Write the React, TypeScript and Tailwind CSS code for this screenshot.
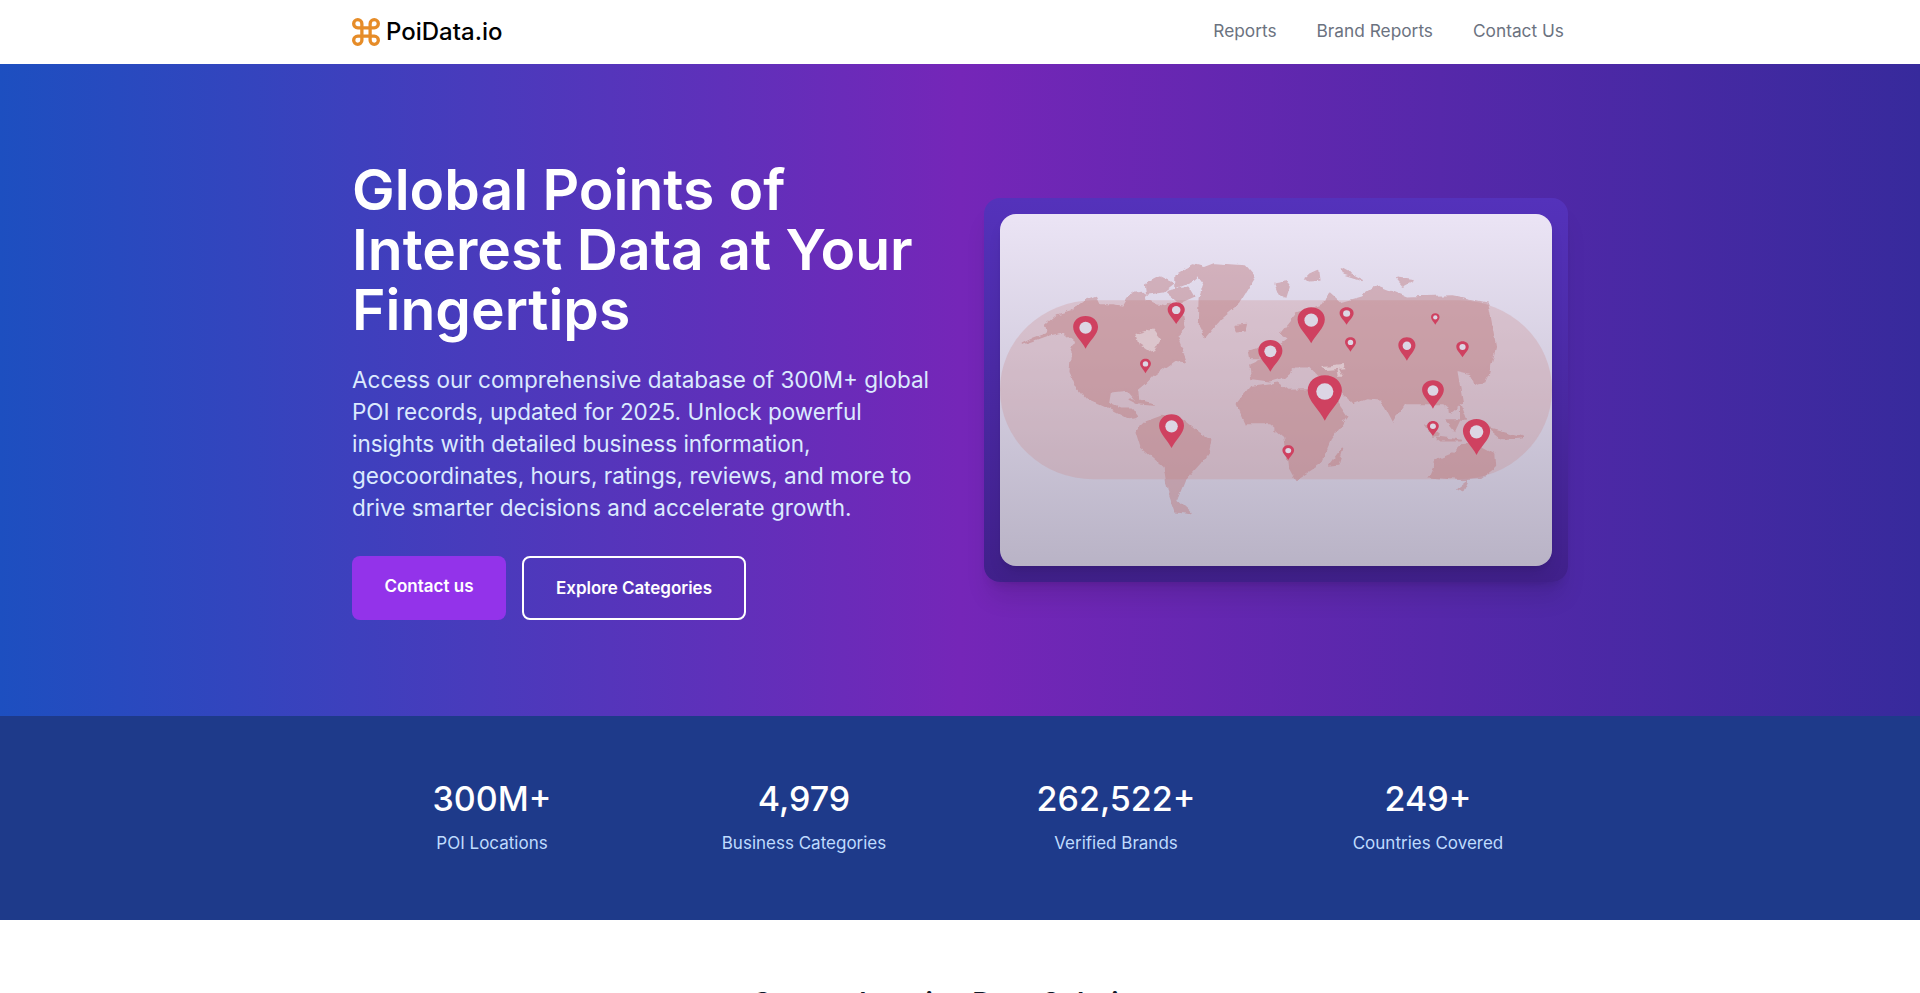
import React from "react";

const FONT = "font-['Inter','Liberation_Sans',sans-serif]";

const pins: [number, number, number, number][] = [
  [297, 378, 476, 64],
  [530, 337, 402, 44],
  [877, 352, 460, 70],
  [968, 352, 404, 36],
  [1196, 370, 404, 22],
  [978, 442, 485, 28],
  [1123, 442, 512, 44],
  [1266, 454, 502, 32],
  [772, 450, 545, 62],
  [451, 506, 550, 28],
  [912, 556, 692, 88],
  [1190, 571, 656, 56],
  [1190, 693, 738, 30],
  [1302, 687, 795, 70],
  [518, 673, 774, 64],
  [818, 766, 810, 30],
];

const land = [
  // North America
  "M135 462 L165 445 L200 430 L195 405 L225 375 L262 362 L300 330 L322 320 L332 345 L365 345 L395 350 L405 330 L420 308 L445 305 L452 330 L480 345 L500 352 L512 340 L545 370 L552 415 L530 440 L555 515 L525 510 L500 530 L470 555 L450 580 L430 600 L433 640 L420 620 L405 600 L360 605 L355 640 L385 655 L415 655 L430 680 L410 685 L370 660 L330 640 L300 625 L275 590 L258 545 L262 490 L270 455 L240 425 L200 435 L165 450 Z",
  // Arctic Canada
  "M452 285 L490 262 L522 280 L495 305 L455 312 Z",
  "M530 255 L575 225 L605 235 L565 275 L530 292 Z",
  "M505 305 L560 292 L575 322 L540 340 Z",
  // Greenland
  "M578 245 L630 222 L705 228 L732 265 L692 340 L645 385 L605 442 L588 405 L590 325 L602 282 Z",
  "M682 407 L712 404 L708 422 L685 425 Z",
  "M785 282 L820 276 L808 320 L795 312 Z",
  "M862 262 L893 245 L896 270 L872 272 Z",
  "M955 237 L1005 268 L962 252 Z",
  "M1095 265 L1138 272 L1112 288 Z",
  // Cuba / Caribbean
  "M410 628 L470 645 L430 640 Z",
  // South America
  "M428 725 L455 695 L490 680 L545 690 L585 728 L618 752 L612 785 L590 820 L550 872 L530 930 L567 970 L530 965 L510 900 L500 830 L440 770 Z",
  // Africa
  "M688 640 L722 590 L790 580 L815 602 L870 600 L930 612 L970 680 L925 750 L900 820 L838 868 L820 830 L810 740 L770 700 L710 700 Z",
  // Eurasia
  "M725 565 L720 525 L760 505 L795 512 L792 470 L820 445 L800 430 L840 372 L910 345 L922 310 L950 340 L1010 320 L1050 290 L1120 322 L1240 318 L1330 340 L1350 470 L1330 560 L1298 585 L1290 550 L1250 540 L1265 640 L1240 665 L1215 640 L1170 640 L1115 640 L1088 692 L1060 630 L1020 625 L985 640 L945 590 L905 565 L875 530 L835 530 L805 560 L770 572 Z",
  // UK
  "M718 480 L745 470 L745 505 L722 505 Z",
  // Japan
  "M1298 582 L1335 530 L1320 578 Z",
  // Australia
  "M1180 860 L1198 812 L1240 792 L1262 765 L1295 762 L1348 795 L1350 830 L1310 865 L1268 868 Z",
  "M1255 898 L1280 875 L1268 904 Z",
  "M925 825 L957 775 L945 822 Z",
  // Indonesia
  "M1170 705 L1205 735 L1190 738 Z",
  "M1200 742 L1265 752 L1210 752 Z",
  "M1222 690 L1258 690 L1245 722 Z",
  "M1262 650 L1275 690 L1262 690 Z",
  "M1335 715 L1420 742 L1370 748 Z",
];

function WorldMap() {
  return (
    <svg viewBox="77 72 1419 1056" preserveAspectRatio="none" className="block h-full w-full">
      <defs>
        <linearGradient id="card" x1="0" y1="0" x2="0" y2="1">
          <stop offset="0" stopColor="#ebe4f5" />
          <stop offset="1" stopColor="#b9b3c6" />
        </linearGradient>
        <filter id="coast" x="-5%" y="-5%" width="110%" height="110%">
          <feTurbulence type="fractalNoise" baseFrequency="0.035" numOctaves="3" seed="4" result="n" />
          <feDisplacementMap in="SourceGraphic" in2="n" scale="16" xChannelSelector="R" yChannelSelector="G" />
          <feGaussianBlur stdDeviation="1.2" />
        </filter>
      </defs>
      <rect x="77" y="72" width="1419" height="1056" fill="url(#card)" />
      <rect x="77" y="331" width="1419" height="537" rx="240" ry="269" fill="#c98a8a" fillOpacity="0.28" />
      <g opacity="0.42" filter="url(#coast)">
        {land.map((d) => (
          <path key={d} d={d} fill="#bb7478" stroke="#bb7478" strokeWidth="5" strokeLinejoin="round" />
        ))}
      </g>
      <g filter="url(#coast)" fill="#dcc5cc">
        <path d="M425 432 L468 418 L490 450 L470 490 L432 460 Z" />
        <path d="M905 528 L960 522 L965 535 L915 540 Z" />
        <path d="M942 520 L958 560 L948 560 Z" />
      </g>
      {pins.map(([cx, top, bottom, w]) => (
        <g key={`${cx}-${top}`} transform={`translate(${cx} ${top}) scale(${w / 64} ${(bottom - top) / 98})`}>
          <path d="M0 98 C-10 75 -32 55 -32 33 C-32 14 -18 0 0 0 C18 0 32 14 32 33 C32 55 10 75 0 98Z" fill="#cf4160" />
          <ellipse cx="0" cy="35" rx="16" ry="18" fill="#dcd6e4" />
        </g>
      ))}
    </svg>
  );
}

function Logo() {
  return (
    <svg width="28" height="28" viewBox="1.8 1.8 20.4 20.4" fill="none" stroke="#e68c28" strokeWidth="2.4" strokeLinecap="round" strokeLinejoin="round">
      <path d="M15 6v12a3 3 0 1 0 3-3H6a3 3 0 1 0 3 3V6a3 3 0 1 0-3 3h12a3 3 0 1 0-3-3" />
    </svg>
  );
}

const stats = [
  ["300M+", "POI Locations"],
  ["4,979", "Business Categories"],
  ["262,522+", "Verified Brands"],
  ["249+", "Countries Covered"],
];

export default function App() {
  return (
    <div className={`h-[993px] overflow-hidden bg-white ${FONT}`}>
      <header className="h-16 bg-white">
        <div className="mx-auto flex h-full max-w-7xl items-center justify-between px-8">
          <div className="flex items-center gap-1.5">
            <Logo />
            <span className="text-2xl font-medium text-black">PoiData.io</span>
          </div>
          <nav className="flex gap-10 pr-1 pb-0.5 text-[17.3px] text-[#6b7280]">
            <a>Reports</a>
            <a>Brand Reports</a>
            <a>Contact Us</a>
          </nav>
        </div>
      </header>
      <section className="h-[652px] bg-[linear-gradient(90deg,#1d4fc0,#7526b8,#372a9c)]">
        <div className="mx-auto grid h-full max-w-7xl grid-cols-2 items-center gap-12 px-8">
          <div className="text-white">
            <h1 className="text-[57px] font-semibold leading-[60px]">Global Points of Interest Data at Your Fingertips</h1>
            <p className="mt-6 text-[22.5px] leading-8 text-blue-100">
              Access our comprehensive database of 300M+ global POI records, updated for 2025. Unlock powerful insights with detailed business information, geocoordinates, hours, ratings, reviews, and more to drive smarter decisions and accelerate growth.
            </p>
            <div className="mt-8 flex gap-4">
              <button className="h-16 w-[154px] rounded-lg bg-[#9333ea] pb-0.5 text-[17px] font-semibold">Contact us</button>
              <button className="h-16 w-[224px] rounded-lg border-2 border-white pt-0.5 text-[17px] font-semibold">Explore Categories</button>
            </div>
          </div>
          <div className="rounded-2xl bg-gradient-to-b from-[#5432bb] to-[#40208a] p-4 shadow-xl">
            <div className="h-[352px] overflow-hidden rounded-2xl shadow-lg">
              <WorldMap />
            </div>
          </div>
        </div>
      </section>
      <section className="h-[204px] bg-[#1e3a8a]">
        <div className="mx-auto grid h-full max-w-7xl grid-cols-4 items-center gap-8 px-8 text-center">
          {stats.map(([n, l]) => (
            <div key={l}>
              <div className="text-[34px] font-medium leading-10 text-white">{n}</div>
              <div className="mt-3 text-[17px] text-[#bfdbfe]">{l}</div>
            </div>
          ))}
        </div>
      </section>
      <section className="pt-[65px] text-center">
        <h2 className="text-[28px] font-semibold leading-9 text-gray-900">Comprehensive Data Solutions</h2>
      </section>
    </div>
  );
}
